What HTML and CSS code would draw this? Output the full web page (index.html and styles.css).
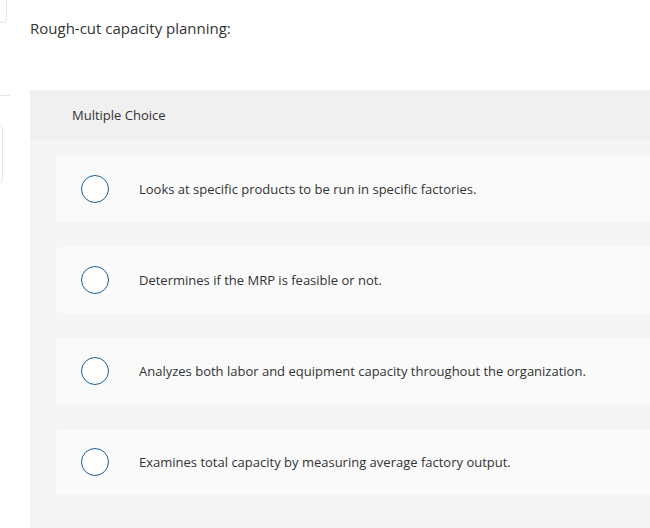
FILE: index.html
```html
<!DOCTYPE html>
<html>
<head>
<meta charset="utf-8">
<link rel="stylesheet" href="styles.css">
</head>
<body>
<div class="edge edge-top"></div>
<div class="edge-line"></div>
<div class="edge edge-mid"></div>
<div class="page">
  <p class="question">Rough-cut capacity planning:</p>
  <section class="panel">
    <header class="panel-head">Multiple Choice</header>
    <div class="options">
      <label class="option"><span class="radio"></span><span class="text">Looks at specific products to be run in specific factories.</span></label>
      <label class="option"><span class="radio"></span><span class="text">Determines if the MRP is feasible or not.</span></label>
      <label class="option"><span class="radio"></span><span class="text">Analyzes both labor and equipment capacity throughout the organization.</span></label>
      <label class="option"><span class="radio"></span><span class="text">Examines total capacity by measuring average factory output.</span></label>
    </div>
  </section>
</div>
</body>
</html>
```
FILE: styles.css
```css
html, body {
  margin: 0;
  padding: 0;
  background: #fff;
  overflow: hidden;
}
body {
  font-family: "Open Sans", "Liberation Sans", sans-serif;
  color: #333;
  width: 650px;
  height: 528px;
  position: relative;
}
.edge {
  position: absolute;
  left: -10px;
  border: 1px solid #e6e6e6;
  border-radius: 4px;
}
.edge-top {
  top: -10px;
  width: 15px;
  height: 31px;
}
.edge-line {
  position: absolute;
  left: 0;
  top: 95px;
  width: 10px;
  height: 1px;
  background: #e6e6e6;
}
.edge-mid {
  top: 124px;
  width: 11px;
  height: 57px;
}
.page {
  padding: 0 0 0 30px;
}
.question {
  margin: 0;
  padding-top: 18px;
  font-size: 15px;
  line-height: 20px;
  height: 72px;
}
.panel {
  background: #f5f5f5;
  width: 640px;
  min-height: 460px;
}
.panel-head {
  background: #f0f0f0;
  height: 50px;
  display: flex;
  align-items: center;
  padding-left: 42px;
  font-size: 13px;
}
.options {
  display: flex;
  flex-direction: column;
  gap: 25px;
  padding: 16px 0 0 26px;
}
.option {
  display: flex;
  align-items: center;
  height: 66px;
  background: #fafafa;
  border-radius: 4px 0 0 4px;
  padding-left: 25px;
  font-size: 13px;
}
.radio {
  box-sizing: border-box;
  width: 28px;
  height: 28px;
  border: 1.5px solid #1d5c9c;
  border-radius: 50%;
  background: #fff;
  flex: none;
}
.text {
  margin-left: 30px;
}
```
